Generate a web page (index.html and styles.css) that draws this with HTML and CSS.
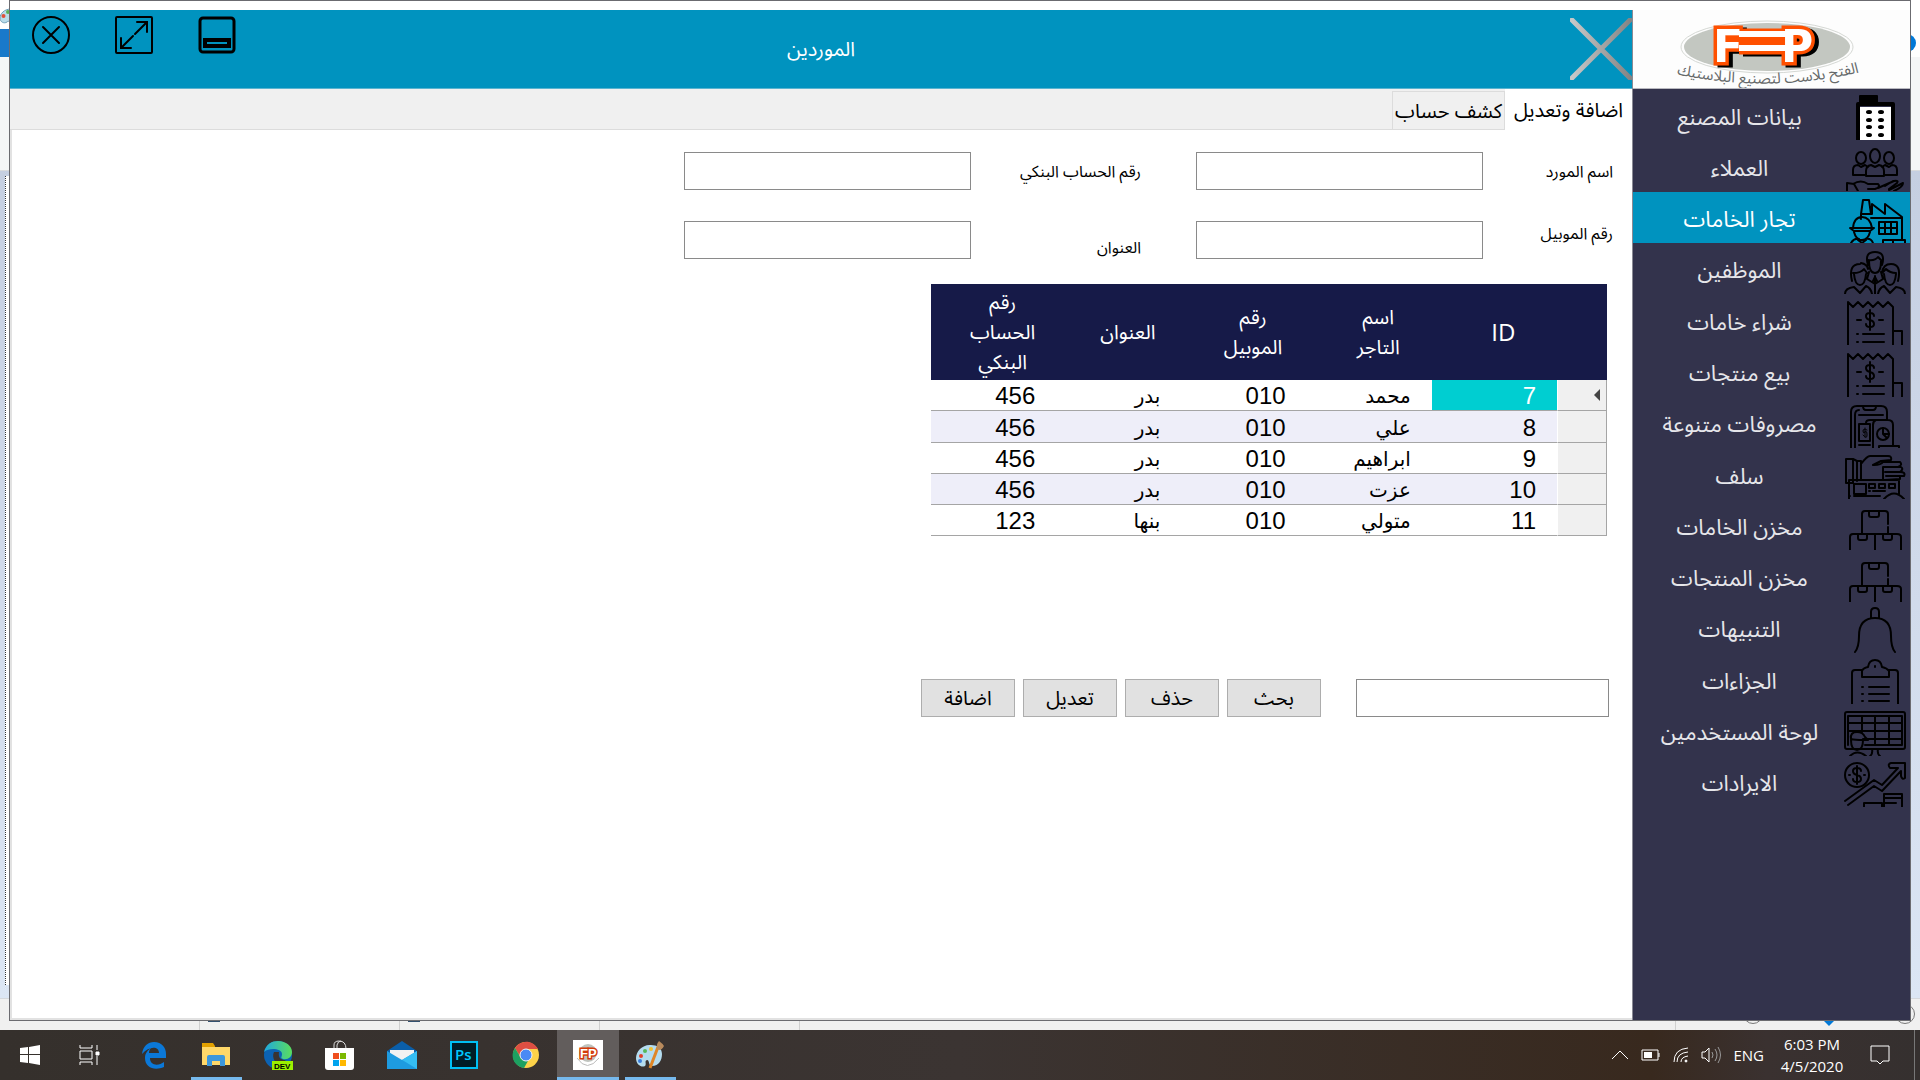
FILE: index.html
```html
<!DOCTYPE html>
<html lang="ar" dir="rtl">
<head>
<meta charset="utf-8">
<title>الموردين</title>
<link rel="stylesheet" href="styles.css">
</head>
<body>
<div class="screen">
  <div class="desktop">
    <div class="backdrop" aria-hidden="true">
      <div class="bd-title"><svg width="22" height="16" viewBox="0 0 22 16"><path d="M11 1C4 1 0 6 0 10s4 6 7 4c2-2 3 1 6 1 5 0 9-4 9-7s-4-7-11-7z" fill="#b9dcea" stroke="#6f9fb8"/><circle cx="3.500" cy="8" r="2" fill="#e0503a"/><circle cx="8" cy="4" r="2" fill="#59b259"/></svg></div>
      <div class="bd-menu"></div>
      <div class="bd-ribbon"></div>
      <div class="bd-canvas"><div class="bd-sheet"></div></div>
      <div class="bd-status"><i class="cut"></i><i class="cut"><b class="mark"></b></i><i class="cut"><b class="mark"></b></i><i class="cut"></i><i class="cut grow"></i><i class="ring"></i><i class="thumb"></i><i class="ring"></i></div>
      <i class="bd-help"></i>
    </div>

    <main class="window">
      <aside class="side">
        <div class="logo">
          <svg width="278" height="78" viewBox="0 0 278 78">
            <ellipse cx="134" cy="37" rx="86" ry="26" fill="none" stroke="#d5d8d4"/>
            <ellipse cx="134" cy="37" rx="83" ry="24" fill="#c3c7c1"/>
            <g class="fp">
              <path class="fp-edge" d="M106 25h54M106 38h54"/>
              <text x="80" y="52">F</text><text x="148" y="52">P</text>
              <path class="fp-face" d="M106 24h54M106 38h54"/>
            </g>
            <path id="arc" d="M26 60Q134 88 244 58" fill="none"/>
            <text class="motto"><textPath href="#arc" startOffset="50%">الفتح بلاست لتصنيع البلاستيك</textPath></text>
          </svg>
        </div>
        <nav class="menu">
          <a href="#"><svg class="ico" viewBox="0 0 64 51"><path d="M17 18h31v33H17z" fill="#fff" stroke="none"/><path d="M17 13V7h17v6" fill="#000"/><path d="M15 51V15h35v36" stroke-width="4"/><g fill="#000" stroke="none"><ellipse cx="26" cy="23" rx="3" ry="2"/><ellipse cx="38" cy="23" rx="3" ry="2"/><ellipse cx="26" cy="31" rx="3" ry="2"/><ellipse cx="38" cy="31" rx="3" ry="2"/><ellipse cx="26" cy="38" rx="3" ry="2"/><ellipse cx="38" cy="38" rx="3" ry="2"/><ellipse cx="26" cy="46" rx="3" ry="2"/><ellipse cx="38" cy="46" rx="3" ry="2"/></g></svg><span>بيانات المصنع</span></a>
          <a href="#"><svg class="ico" viewBox="0 0 64 51"><ellipse cx="18" cy="18" rx="5" ry="6"/><ellipse cx="32" cy="16" rx="5" ry="7"/><ellipse cx="46" cy="18" rx="5" ry="6"/><path d="M22 35H10v-5q0-5 5-5l3 2 4-2 3 2M42 35h12v-5q0-5-5-5l-3 2-4-2-3 2M23 36v-5q0-5 5-6l4 2 4-2q5 1 5 6v5zM4 51v-8l7 1 4 7M10 44q8-5 15 0h10q3 3-3 5h-7M35 48l16-7q5-1 3 2l-8 6M42 46l8-5M46 50l14-7q0 4-9 8"/></svg><span>العملاء</span></a>
          <a href="#" class="on" aria-current="page"><svg class="ico" viewBox="0 0 64 51"><path d="M18 22l2-14h6l2 14zM29 22V12l13 10V12l17 13v22M18 22v5M28 26h31M36 30h18v12H36zM42 30v12M48 30v12M36 36h18M10 36q1-11 9-11t10 11M7 36h24l-4 3H11zM11 40q2 8 8 8t8-8M15 48l4 3 4-3M8 51q3-5 8-4M30 51q-2-5-7-4M40 51v-3h22v3M50 48v3"/></svg><span>تجار الخامات</span></a>
          <a href="#"><svg class="ico" viewBox="0 0 64 51"><path d="M25 22q-4-13 7-13t7 13M25 17q7 1 10-3l4 4M26 18q0 12 6 12t6-12M9 38q-4-17 8-17M18 20q6 1 7 6M10 30q8 0 11-4l3 4M11 31q1 11 6 11t6-11M55 38q4-17-7-17-8 0-9 9M39 30l4-4q4 4 10 4M41 31q1 11 6 11t6-11M2 51q0-6 9-7l6 6 6-7q5 2 6 8M62 51q0-6-9-7l-6 6-6-7q-5 2-6 8M26 29l-2 7 8 5 8-5-2-7M32 33v18M30 38l2-4 2 4"/></svg><span>الموظفين</span></a>
          <a href="#"><svg class="ico" viewBox="0 0 64 51"><path d="M5 51V8l5 5 5-5 5 5 5-5 5 5 5-5 5 5 5-5 5 5v38M50 37h9v14M14 26h4M36 26h4M14 40h1M20 40h21M14 48h1M20 48h21"/><path d="M31 22q0-3-4-3t-4 3 4 4 4 4-4 3-4-3M27 16v20"/></svg><span>شراء خامات</span></a>
          <a href="#"><svg class="ico" viewBox="0 0 64 51"><path d="M5 51V8l5 5 5-5 5 5 5-5 5 5 5-5 5 5 5-5 5 5v38M50 37h9v14M14 26h4M36 26h4M14 40h1M20 40h21M14 48h1M20 48h21"/><path d="M31 22q0-3-4-3t-4 3 4 4 4 4-4 3-4-3M27 16v20"/></svg><span>بيع منتجات</span></a>
          <a href="#"><svg class="ico" viewBox="0 0 64 51"><path d="M8 51V15q0-6 6-6h24q6 0 6 6v8M12 51V18q0-5 4-5M20 9q0 4 3 4h7q3 0 3-4M16 18h24M16 44V27h11v17zM23 26q0-3 4-3h18q5 0 5 5v20M30 51V28q0-4 3-5M16 48h11M36 51v-2h20v2"/><circle cx="40" cy="37" r="6"/><path d="M40 31v6l4 4M40 37h6"/><path d="M24 33q-4-2-4 1t2 1 2 3-4 0M22 31v9" stroke-width="1"/></svg><span>مصروفات متنوعة</span></a>
          <a href="#"><svg class="ico" viewBox="0 0 64 51"><path d="M3 11h7v24H3zM10 11l4 2v20M14 13h4v19M18 16q6-8 9-8h18q4 0 3 4l-10 1-8 4M31 17q7 0 9-3h17q3 3-2 5H40v13M40 19h18q3 2-1 5H42M57 24q6 0 4 4H43M57 28v3l-15 1M6 51V32h50v14M11 36h12v10H11zM26 36h6v4h-6zM36 36h6v4h-6zM46 36h6v4h-6zM26 43h1M30 43h12M6 48h1M11 48h26M41 51q10-11 20 0"/></svg><span>سلف</span></a>
          <a href="#"><svg class="ico" viewBox="0 0 64 51"><path d="M19 35V15q0-3 3-3h20q3 0 3 3v10M45 28v7M26 12v4q0 2 2 2h6q2 0 2-2v-4M7 51V38q0-3 3-3h44q4 0 4 3v13M32 35v16M15 35v4q0 2 2 2h5q2 0 2-2v-4M40 35v4q0 2 2 2h5q2 0 2-2v-4"/></svg><span>مخزن الخامات</span></a>
          <a href="#"><svg class="ico" viewBox="0 0 64 51"><path d="M19 35V15q0-3 3-3h20q3 0 3 3v10M45 28v7M26 12v4q0 2 2 2h6q2 0 2-2v-4M7 51V38q0-3 3-3h44q4 0 4 3v13M32 35v16M15 35v4q0 2 2 2h5q2 0 2-2v-4M40 35v4q0 2 2 2h5q2 0 2-2v-4"/></svg><span>مخزن المنتجات</span></a>
          <a href="#"><svg class="ico" viewBox="0 0 64 51"><path d="M28 16v-6q0-4 4-4t4 4v6M12 50q4-5 4-16 0-18 16-18t16 18q0 11 4 16"/></svg><span>التنبيهات</span></a>
          <a href="#"><svg class="ico" viewBox="0 0 64 51"><path d="M9 51V20q0-3 3-3h7M46 17h6q3 0 3 3v31M19 24v-6q1-3 6-4 1-7 7-7t7 7q5 1 7 4v6zM32 13v1M19 34h1M26 34h20M19 41h1M26 41h20M19 48h1M26 48h20"/></svg><span>الجزاءات</span></a>
          <a href="#"><svg class="ico" viewBox="0 0 64 51"><rect x="2" y="7" width="60" height="37" rx="2"/><path d="M5 11h54v29H22M5 11v29M19 11v16M32 11v29M46 11v29M5 18h54M5 26h54M20 34h39M29 44q1 5-2 7M35 44q-1 5 2 7M7 51q7-7 16 0"/><path d="M8 35q0 10 6 10t6-10M8 34q-1-7 6-7 6 0 8 5l3 3h-5q-8 0-12-1z"/></svg><span>لوحة المستخدمين</span></a>
          <a href="#"><svg class="ico" viewBox="0 0 64 51"><circle cx="14" cy="19" r="12"/><path d="M18 15q0-3-4-3t-4 3 4 4 4 4-4 3-4-3M14 10v18M6 19h1M21 19h1M2 45l29-21 8 5 16-17h-8q-3-4 1-5h14v15q-3 2-4-2v-5L39 35l-8-5-26 19M21 51v-4h18v4M41 51V38h18v13M41 42h18M41 47h12"/></svg><span>الايرادات</span></a>
        </nav>
      </aside>

      <section class="content">
        <header class="bar">
          <button class="back" aria-label="رجوع"><svg width="62" height="62" viewBox="0 0 62 62"><defs><linearGradient id="steel"><stop offset="0" stop-color="#c8c8c8"/><stop offset="1" stop-color="#858585"/></linearGradient></defs><path d="M2 2l58 58M2 60L60 2" stroke="url(#steel)" stroke-width="5" stroke-linecap="round"/></svg></button>
          <h1>الموردين</h1>
          <div class="winctl">
            <button aria-label="تصغير"><svg width="38" height="38" viewBox="0 0 38 38"><rect x="2" y="2" width="34" height="34" rx="3" stroke-width="3"/><rect x="7" y="24" width="24" height="6" stroke-width="4"/></svg></button>
            <button aria-label="تكبير"><svg width="38" height="38" viewBox="0 0 38 38"><rect x="1" y="1" width="36" height="36" rx="1"/><path d="M20 18L32 6M22 6h10v10M18 20L6 32M6 22v10h10"/></svg></button>
            <button aria-label="اغلاق"><svg width="38" height="38" viewBox="0 0 38 38"><circle cx="19" cy="19" r="18"/><path d="M11 11l16 16M27 11L11 27"/></svg></button>
          </div>
        </header>
        <div class="tabs" role="tablist">
          <button role="tab" class="tab sel" aria-selected="true">اضافة وتعديل</button>
          <button role="tab" class="tab" aria-selected="false">كشف حساب</button>
        </div>
        <div class="panel">
          <form class="fields">
            <label for="name">اسم المورد</label><input id="name" type="text">
            <label for="bank">رقم الحساب البنكي</label><input id="bank" type="text">
            <label for="mobile" class="top">رقم الموبيل</label><input id="mobile" type="text">
            <label for="addr" class="bottom">العنوان</label><input id="addr" type="text">
          </form>
          <div class="grid-box">
            <table>
              <colgroup><col class="c-row"><col><col><col><col><col></colgroup>
              <thead><tr><th></th><th class="latin">ID</th><th>اسم<br>التاجر</th><th>رقم<br>الموبيل</th><th>العنوان</th><th>رقم<br>الحساب<br>البنكي</th></tr></thead>
              <tbody>
                <tr><td class="rh"><i class="cursor"></i></td><td class="hit">7</td><td class="ar">محمد</td><td>010</td><td class="ar">بدر</td><td>456</td></tr>
                <tr><td class="rh"></td><td>8</td><td class="ar">علي</td><td>010</td><td class="ar">بدر</td><td>456</td></tr>
                <tr><td class="rh"></td><td>9</td><td class="ar">ابراهيم</td><td>010</td><td class="ar">بدر</td><td>456</td></tr>
                <tr><td class="rh"></td><td>10</td><td class="ar">عزت</td><td>010</td><td class="ar">بدر</td><td>456</td></tr>
                <tr><td class="rh"></td><td>11</td><td class="ar">متولي</td><td>010</td><td class="ar">بنها</td><td>123</td></tr>
              </tbody>
            </table>
          </div>
          <div class="actions">
            <input type="text" aria-label="بحث">
            <button>بحث</button><button>حذف</button><button>تعديل</button><button>اضافة</button>
          </div>
        </div>
      </section>
    </main>
  </div>

  <footer class="taskbar" dir="ltr">
    <div class="apps">
      <button aria-label="Start"><svg width="20" height="20" viewBox="0 0 20 20" fill="#fff"><path d="M0 3l8-1v7H0zM9 2l11-2v9H9zM0 10h8v8l-8-1zM9 10h11v10L9 18z"/></svg></button>
      <button class="view" aria-label="Task view"><svg width="22" height="20" viewBox="0 0 22 20" fill="none" stroke="#fff"><path d="M1 0v3h12V0M1 20v-3h12v3M1 6h12v8H1zM18 0v5M18 11v9"/><path d="M17 7h3v3h-3z" fill="#fff"/></svg></button>
      <button aria-label="Edge"><svg width="26" height="28" viewBox="0 0 26 28"><path d="M1 13C2 5 7 1 13 1c8 0 12 6 12 12v4H9c0 8 9 8 14 4v5c-9 4-19 1-19-9 0-5 3-8 6-10-2 2-2 4-2 5h10C18 5 8 5 1 13z" fill="#0b78d8"/></svg></button>
      <button class="open" aria-label="File Explorer"><svg width="28" height="24" viewBox="0 0 28 24"><path d="M0 0h11l2 3v4H0z" fill="#e3a100"/><path d="M0 4h28v18H0z" fill="#ffd869"/><path d="M5 23v-9q0-2 2-2h14q2 0 2 2v9h-5v-5h-8v5z" fill="#3c97dc"/></svg></button>
      <button aria-label="Edge Dev"><svg width="30" height="30" viewBox="0 0 30 30"><defs><linearGradient id="ed" x1="0" x2="1"><stop offset="0" stop-color="#1fa8e0"/><stop offset="1" stop-color="#5ade5c"/></linearGradient></defs><circle cx="15" cy="15" r="14" fill="#0c63b4"/><path d="M1 12C3 4 9 1 15 1c8 0 14 5 14 11 0 5-4 8-9 7-3-1-1-2-1-5 0-5-12-7-18-2z" fill="url(#ed)"/><path d="M11 12c-3 6 2 13 9 14h6l-4-6c-4 0-7-2-6-8z" fill="#3a3332"/><path d="M9 21h21v9H9z" fill="#9cf000"/><text x="11" y="29" font-family="Liberation Sans" font-size="8" font-weight="700">DEV</text></svg></button>
      <button aria-label="Store"><svg width="30" height="30" viewBox="0 0 30 30"><path d="M9 9V5q0-4 5-4 7 0 7 8M12 8V5q1-4 4-4" fill="none" stroke="#ddd" stroke-width="1"/><path d="M0 8h29v19q0 3-3 3H3q-3 0-3-3z" fill="#fff"/><path d="M8 13h6v6H8z" fill="#f04e1f"/><path d="M15 13h6v6h-6z" fill="#7cb900"/><path d="M8 20h6v6H8z" fill="#00a3ee"/><path d="M15 20h6v6h-6z" fill="#ffb800"/></svg></button>
      <button aria-label="Mail"><svg width="30" height="28" viewBox="0 0 30 28"><path d="M0 10L15 0l15 10v6H0z" fill="#0a5ea9"/><path d="M3 9h24v10H3z" fill="#f2f2f2"/><path d="M0 10l15 9 15-9v18H0z" fill="#1e9be0"/><path d="M30 10v18L12 17l3 2z" fill="#35bdf2"/></svg></button>
      <button aria-label="Photoshop"><svg width="28" height="28" viewBox="0 0 28 28"><path d="M1 1h26v26H1z" fill="#001d26" stroke="#00c0f3" stroke-width="2"/><text x="5" y="19" font-family="Open Sans" font-size="15" font-weight="600" fill="#00c8ff">Ps</text></svg></button>
      <button aria-label="Chrome"><svg width="28" height="28" viewBox="0 0 28 28"><circle cx="14" cy="14" r="13" fill="#fdd249"/><path d="M3 7C9-2 21-1 26 8H14L9 17z" fill="#dd4f43"/><path d="M3 7l6 10 7 3-4 7C3 26-3 16 3 7z" fill="#1da061"/><circle cx="14" cy="14" r="6" fill="#4a8af5" stroke="#f4f4f4" stroke-width="1"/></svg></button>
      <button class="open cur" aria-label="FP"><svg width="30" height="30" viewBox="0 0 30 30"><path d="M0 0h30v30H0z" fill="#fff"/><circle cx="15" cy="13" r="9" fill="#bfc3be"/><path d="M4 18q10 15 22 0" fill="none" stroke="#bbb"/><text x="7" y="18" font-family="Liberation Sans" font-size="13" font-weight="700" fill="#fff" stroke="#d33a08" stroke-width="3" paint-order="stroke">FP</text></svg></button>
      <button class="open" aria-label="Paint"><svg width="30" height="28" viewBox="0 0 30 28"><path d="M16 4C8 3 1 10 1 17s6 10 9 8c2-2-1-5 2-6 3 0 1 6 5 6 7 0 10-6 10-12S22 4 16 4z" fill="#b4dcef"/><circle cx="6" cy="15" r="2" fill="#e0402c"/><circle cx="10" cy="10" r="2" fill="#57b85a"/><circle cx="16" cy="8" r="2" fill="#f1c233"/><circle cx="5" cy="20" r="2" fill="#3c7edb"/><path d="M15 27L23 6" stroke="#df8626" stroke-width="3"/><path d="M22 8q-1-5 2-8 4 3 5 5-2 4-5 4z" fill="#b88a5c"/></svg></button>
    </div>
    <div class="tray">
      <svg width="18" height="18" viewBox="0 0 18 18"><path d="M1 13l8-8 8 8"/></svg>
      <svg width="20" height="12" viewBox="0 0 20 12"><path d="M1 1h16v10H1zM18 4v4"/><path d="M3 3h8v6H3z" fill="#fff" stroke="none"/></svg>
      <svg width="16" height="16" viewBox="0 0 16 16"><path d="M1 15Q1 2 15 1M4 15Q4 6 15 5M8 15Q8 10 15 9"/><circle cx="13" cy="14" r="1" fill="#fff"/></svg>
      <svg width="20" height="18" viewBox="0 0 20 18"><path d="M1 6h3l4-4v14l-4-4H1z"/><path d="M11 6q2 3 0 6M14 3q4 6 0 12M17 1q5 8 0 16" stroke="#999"/></svg>
      <span>ENG</span>
      <div class="clock"><span>6:03 PM</span><span>4/5/2020</span></div>
      <svg width="20" height="20" viewBox="0 0 20 20"><path d="M1 1h18v15h-6l-3 3-3-3H1z"/></svg>
      <i class="peek"></i>
    </div>
  </footer>
</div>
</body>
</html>
```
FILE: styles.css
```css
* { box-sizing: border-box; }

body {
  margin: 0;
  font-family: "Segoe UI", "Noto Sans", "Noto Sans Arabic", "DejaVu Sans", sans-serif;
  font-size: 20px;
  color: #000;
}

button {
  margin: 0;
  padding: 0;
  border: 0;
  background: none;
  font: inherit;
  color: inherit;
}

svg { display: block; flex: none; }

.screen {
  display: flex;
  flex-direction: column;
  min-height: 100vh;
}

/* Desktop area: a partly hidden window behind, the application in front */
.desktop {
  position: relative;
  display: flex;
  flex: 1;
  padding: 0 9px 9px;
}

.backdrop {
  position: absolute;
  inset: 0;
  display: flex;
  flex-direction: column;
  direction: ltr;
}
.bd-title { height: 29px; padding-top: 8px; background: #fff; }
.bd-menu { height: 28px; background: linear-gradient(90deg, #1979ca 50%, #fff 50%); }
.bd-ribbon { height: 114px; background: #f5f6f7; border-bottom: 1px solid #d9dbdd; }
.bd-canvas { display: flex; flex: 1; padding: 5px 0 13px 5px; background: linear-gradient(#c5cfe1, #dce6f4); border-bottom: 1px solid #d5d8dc; }
.bd-sheet { width: 50%; border-left: 1px dotted #333; background: #fff; }
.bd-status { display: flex; align-items: flex-end; height: 31px; background: #f0f0f0; }
.cut { display: flex; align-items: flex-end; width: 200px; height: 30px; padding: 0 0 8px 8px; border-right: 1px solid #d0d0d0; }
.cut.grow { flex: 1; }
.mark { width: 12px; height: 12px; border: 1px solid #33506e; }
.ring { width: 20px; height: 20px; margin: 0 0 6px 67px; border: 1px solid #777; border-radius: 10px; }
.thumb { width: 10px; height: 5px; margin: 0 0 4px 61px; background: #0078d7; clip-path: polygon(0 0, 100% 0, 50% 100%); }
.thumb + .ring { margin-left: 61px; margin-right: 5px; }
.bd-help { position: absolute; top: 34px; right: 4px; width: 18px; height: 18px; border-radius: 9px; background: #0078d7; }

.window {
  position: relative;
  display: flex;
  flex: 1;
  padding-top: 9px;
  border: 1px solid #6b6b70;
  background: #fff;
}

/* Side menu */
.side {
  display: flex;
  flex-direction: column;
  flex: none;
  width: 278px;
  border-left: 1px solid #8a8a94;
  background: #33334c;
}
.logo { height: 79px; border-bottom: 1px solid #b9b9c0; background: #fdfdfd; overflow: hidden; direction: ltr; }
.fp {
  font: 700 44px "DejaVu Sans", sans-serif;
  fill: #fff;
  filter: drop-shadow(4px 2px 0 #000);
}
.fp text { stroke: #ff5000; stroke-width: 7; paint-order: stroke; }
.fp path { fill: none; }
.fp-edge { stroke: #ff5000; stroke-width: 13; }
.fp-face { stroke: #fff; stroke-width: 6; }
.motto { font-size: 15px; fill: #66696a; text-anchor: middle; }

.menu { display: grid; grid-auto-rows: 1fr; height: 718px; }
.menu a {
  display: flex;
  align-items: center;
  padding: 0 3px;
  overflow: hidden;
  color: #e6e6ea;
  font-size: 22px;
  line-height: 32px;
  text-decoration: none;
}
.menu a.on { background: #0093bf; color: #fff; }
.menu span { flex: 1; padding-top: 2px; text-align: center; white-space: nowrap; }
.ico {
  width: 64px;
  height: 51px;
  fill: none;
  stroke: #000;
  stroke-width: 2;
  stroke-linecap: round;
  stroke-linejoin: round;
}

/* Header */
.content { display: flex; flex-direction: column; flex: 1; min-width: 0; }
.bar {
  display: grid;
  grid-template-columns: 1fr auto 1fr;
  height: 79px;
  border-bottom: 1px solid #5ab4d0;
  background: #0093bf;
}
.back { justify-self: start; align-self: center; }
.bar h1 { margin: 0; align-self: center; color: #fff; font-size: 20px; font-weight: 400; line-height: 32px; }
.winctl { display: flex; gap: 45px; justify-self: end; padding: 6px 0 0; margin-left: 22px; }
.winctl button { height: 38px; }
.winctl svg { fill: none; stroke: #000; stroke-width: 2; stroke-linecap: round; }

/* Tabs */
.tabs { display: flex; align-items: flex-end; height: 41px; background: #f0f0f0; box-shadow: inset 0 -1px #dcdcdc; }
.tab { height: 39px; width: 113px; border: 1px solid #dcdcdc; font-size: 20px; line-height: 32px; white-space: nowrap; }
.tab.sel { height: 41px; width: 127px; border: 0; background: #fff; }

/* Supplier page */
.panel {
  flex: 1;
  padding: 22px 19px 0;
  border: solid #e2e2e2;
  border-width: 0 0 2px 2px;
  background: #fff;
}
.fields {
  display: grid;
  grid-template-columns: 130px 287px 225px 287px;
  row-gap: 31px;
  align-items: center;
}
.fields label { font-size: 16px; line-height: 24px; }
.fields label:nth-of-type(even) { padding-right: 55px; }
.fields .top { align-self: start; }
.fields .bottom { align-self: end; }
.fields input, .actions input { height: 38px; border: 1px solid #8a8a8a; background: #fff; font: inherit; padding: 0 6px; }

.grid-box { margin-top: 25px; padding-right: 6px; }
table { width: 676px; table-layout: fixed; border-collapse: separate; border-spacing: 0; }
col.c-row { width: 50px; }
th { height: 96px; padding: 0 0 0 18px; background: #161a48; color: #fff; font-size: 20px; font-weight: 400; line-height: 30px; text-align: center; }
th.latin { font-family: "Open Sans", sans-serif; font-size: 24px; }
td { height: 31px; padding: 2px 21px 0 0; border-bottom: 1px solid #a5a5a5; font: 24px/28px "Liberation Sans", "DejaVu Sans", sans-serif; white-space: nowrap; }
tbody tr:nth-child(even) td { background: #eeeef9; }
tbody tr:nth-child(2) td { height: 32px; }
td.ar { font-size: 20px; }
tbody tr td.rh { padding: 0 6px; background: #f0f0f0; border-right: 1px solid #a5a5a5; border-left: 1px solid #fff; }
tbody tr td.hit { background: #00ced1; color: #fff; }
.cursor { display: block; width: 6px; height: 12px; background: #444; clip-path: polygon(100% 0, 100% 100%, 0 50%); }

.actions { display: flex; gap: 8px; margin-top: 143px; padding-right: 4px; }
.actions input { width: 253px; margin-left: 27px; }
.actions button { width: 94px; height: 38px; border: 1px solid #adadad; background: #e1e1e1; font-size: 20px; line-height: 32px; }

/* Taskbar */
.taskbar { display: flex; justify-content: space-between; height: 50px; background: linear-gradient(90deg, #35302c, #3b3432 50%, #38291e 86%, #3a3130 92%, #35302f); color: #fff; font-family: "Open Sans", "Noto Sans", sans-serif; }
.apps { display: flex; }
.apps button { display: flex; align-items: center; justify-content: center; width: 62px; }
.apps button:first-child, .apps .view { width: 60px; }
.apps .view { margin-right: 3px; }
.apps .open { background: linear-gradient(#76b9ed, #76b9ed) center bottom / 51px 3px no-repeat; }
.apps .cur { background: linear-gradient(#76b9ed, #76b9ed) center bottom / 62px 3px no-repeat #625d5c; }
.tray { display: flex; align-items: center; gap: 12px; font-size: 15px; }
.tray svg { fill: none; stroke: #fff; stroke-width: 1; }
.clock { display: flex; flex-direction: column; align-items: center; width: 72px; margin-right: 10px; line-height: 22px; }
.peek { width: 6px; height: 50px; margin-left: 12px; border-left: 1px solid #777; }
```
